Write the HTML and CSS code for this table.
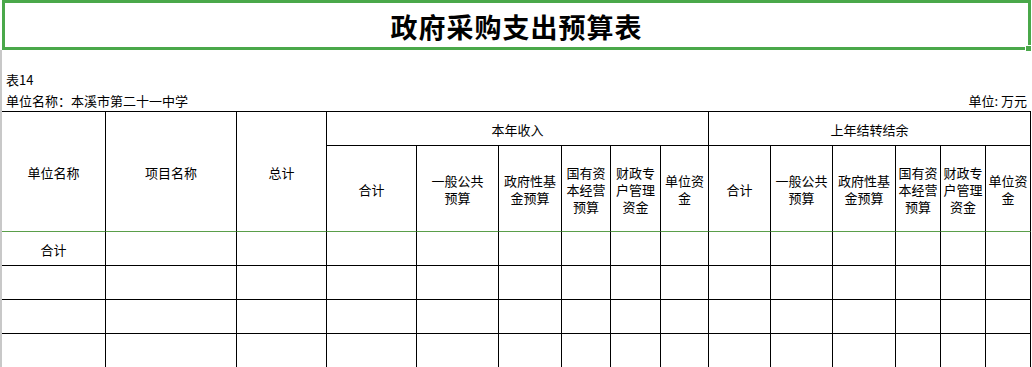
FILE: index.html
```html
<!DOCTYPE html>
<html lang="zh-CN">
<head>
<meta charset="utf-8">
<title>政府采购支出预算表</title>
<link rel="stylesheet" href="styles.css">
</head>
<body>
<div class="title-box">
  <h1 class="title">政府采购支出预算表</h1>
  <span class="handle"></span>
</div>
<div class="sheet">
  <div class="meta">
    <div class="meta-line">表14</div>
    <div class="meta-line split">
      <span>单位名称：本溪市第二十一中学</span>
      <span>单位: 万元</span>
    </div>
  </div>
  <div class="grid">
    <div class="cell h tall c1">单位名称</div>
    <div class="cell h tall c2">项目名称</div>
    <div class="cell h tall c3">总计</div>
    <div class="cell h group g1">本年收入</div>
    <div class="cell h group g2">上年结转结余</div>

    <div class="cell h sub">合计</div>
    <div class="cell h sub">一般公共<br>预算</div>
    <div class="cell h sub">政府性基<br>金预算</div>
    <div class="cell h sub">国有资<br>本经营<br>预算</div>
    <div class="cell h sub">财政专<br>户管理<br>资金</div>
    <div class="cell h sub">单位资<br>金</div>
    <div class="cell h sub">合计</div>
    <div class="cell h sub">一般公共<br>预算</div>
    <div class="cell h sub">政府性基<br>金预算</div>
    <div class="cell h sub">国有资<br>本经营<br>预算</div>
    <div class="cell h sub">财政专<br>户管理<br>资金</div>
    <div class="cell h sub">单位资<br>金</div>

    <div class="cell">合计</div><div class="cell"></div><div class="cell"></div><div class="cell"></div><div class="cell"></div><div class="cell"></div><div class="cell"></div><div class="cell"></div><div class="cell"></div><div class="cell"></div><div class="cell"></div><div class="cell"></div><div class="cell"></div><div class="cell"></div><div class="cell"></div>
    <div class="cell"></div><div class="cell"></div><div class="cell"></div><div class="cell"></div><div class="cell"></div><div class="cell"></div><div class="cell"></div><div class="cell"></div><div class="cell"></div><div class="cell"></div><div class="cell"></div><div class="cell"></div><div class="cell"></div><div class="cell"></div><div class="cell"></div>
    <div class="cell"></div><div class="cell"></div><div class="cell"></div><div class="cell"></div><div class="cell"></div><div class="cell"></div><div class="cell"></div><div class="cell"></div><div class="cell"></div><div class="cell"></div><div class="cell"></div><div class="cell"></div><div class="cell"></div><div class="cell"></div><div class="cell"></div>
    <div class="cell"></div><div class="cell"></div><div class="cell"></div><div class="cell"></div><div class="cell"></div><div class="cell"></div><div class="cell"></div><div class="cell"></div><div class="cell"></div><div class="cell"></div><div class="cell"></div><div class="cell"></div><div class="cell"></div><div class="cell"></div><div class="cell"></div>
  </div>
</div>
</body>
</html>
```
FILE: styles.css
```css
html, body {
  margin: 0;
  padding: 0;
  background: #ffffff;
}
body {
  width: 1032px;
  height: 367px;
  overflow: hidden;
  font-family: "Noto Sans CJK SC", "Noto Sans", sans-serif;
  font-size: 13px;
  color: #000000;
}
.title-box {
  position: relative;
  box-sizing: border-box;
  margin-left: 2px;
  width: 1029px;
  height: 50px;
  border: 3px solid #4aa84a;
  display: flex;
  align-items: center;
  justify-content: center;
}
.title {
  margin: 0;
  padding-top: 3px;
  font-size: 27px;
  font-weight: 700;
  letter-spacing: 1px;
  line-height: 30px;
}
.handle {
  position: absolute;
  right: -4px;
  bottom: -5px;
  width: 5px;
  height: 5px;
  background: #4aa84a;
  border: 1px solid #ffffff;
}
.sheet {
  border-left: 2px solid #c8c8c8;
}
.meta {
  padding-top: 19px;
}
.meta-line {
  height: 21px;
  line-height: 21px;
  padding-left: 4px;
  padding-right: 5px;
}
.split {
  display: flex;
  justify-content: space-between;
}
.grid {
  display: grid;
  grid-template-columns: 104px 131px 90px 90px 82px 63px 49px 50px 48px 62px 62px 63px 45px 45px 45px;
  grid-template-rows: 34px 86px 34px 34px 34px 34px;
  width: 1029px;
  border-top: 1px solid #000000;
}
.cell {
  box-sizing: border-box;
  border-right: 1px solid #000000;
  border-bottom: 1px solid #000000;
  display: flex;
  align-items: center;
  justify-content: center;
  text-align: center;
  line-height: 17px;
  padding-top: 1px;
}
.tall {
  grid-row: span 2;
  border-bottom-color: #5a9e4a;
}
.sub {
  border-bottom-color: #5a9e4a;
}
.g1 {
  grid-column: 4 / span 6;
}
.g2 {
  grid-column: 10 / span 6;
}
```
